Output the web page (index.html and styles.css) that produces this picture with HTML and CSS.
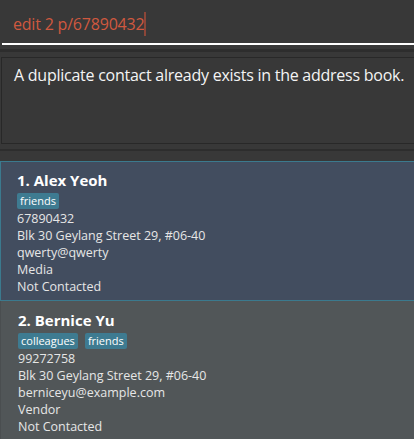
FILE: index.html
```html
<!DOCTYPE html>
<html>
<head>
<meta charset="utf-8">
<link rel="stylesheet" href="styles.css">
</head>
<body>
<div class="command">
  <div class="cmd-field"><span class="cmd-text">edit 2 p/67890432</span><span class="caret"></span></div>
</div>
<div class="result">
  <div class="result-box">A duplicate contact already exists in the address book.</div>
</div>
<div class="list">
  <div class="card selected">
    <div class="name">1. Alex Yeoh</div>
    <div class="tags"><span class="tag">friends</span></div>
    <div class="line">67890432</div>
    <div class="line">Blk 30 Geylang Street 29, #06-40</div>
    <div class="line">qwerty@qwerty</div>
    <div class="line">Media</div>
    <div class="line">Not Contacted</div>
  </div>
  <div class="card">
    <div class="name">2. Bernice Yu</div>
    <div class="tags"><span class="tag">colleagues</span><span class="tag">friends</span></div>
    <div class="line">99272758</div>
    <div class="line">Blk 30 Geylang Street 29, #06-40</div>
    <div class="line">berniceyu@example.com</div>
    <div class="line">Vendor</div>
    <div class="line">Not Contacted</div>
  </div>
</div>
</body>
</html>
```
FILE: styles.css
```css
html, body {
  margin: 0;
  padding: 0;
  background: #383838;
  font-family: "Open Sans", "Noto Sans", sans-serif;
  overflow: hidden;
}
.command {
  height: 49px;
  background: #383838;
  box-sizing: border-box;
  padding: 0 0 0 2px;
}
.cmd-field {
  height: 45px;
  border-bottom: 2px solid #ffffff;
  box-sizing: border-box;
  display: flex;
  align-items: center;
  padding-left: 11px;
  padding-top: 4px;
}
.cmd-text {
  color: #d0583f;
  font-size: 16px;
  letter-spacing: -0.2px;
}
.caret {
  display: inline-block;
  width: 2px;
  height: 24px;
  background: #8c4638;
}
.result {
  border-top: 3px solid #2d2d2d;
  padding: 5px 0 5px 1px;
  border-bottom: 2px solid #2d2d2d;
}
.result-box {
  height: 87px;
  border: 1px solid #282828;
  border-right: none;
  box-sizing: border-box;
  color: #f4f4f4;
  font-size: 16px;
  padding: 6px 0 0 12px;
  letter-spacing: -0.25px;
}
.list {
  margin-top: 10px;
}
.card {
  padding: 8px 0 5px 17px;
  background: #515658;
  color: #e6e6e6;
  border-left: 1px solid #4a4e50;
}
.card.selected {
  background: #424d5f;
  border: 1px solid #3b7a8e;
  border-right: none;
  padding-left: 16px;
  padding-top: 7px;
}
.name {
  color: #ffffff;
  font-weight: bold;
  font-size: 15px;
  line-height: 22px;
}
.tags {
  display: flex;
  gap: 7px;
  margin: 2px 0 1px;
}
.tag {
  background: #3e7b91;
  color: #ffffff;
  font-size: 11px;
  line-height: 16px;
  padding: 0 3px;
  border-radius: 2px;
}
.line {
  font-size: 12.5px;
  line-height: 17px;
}
```
